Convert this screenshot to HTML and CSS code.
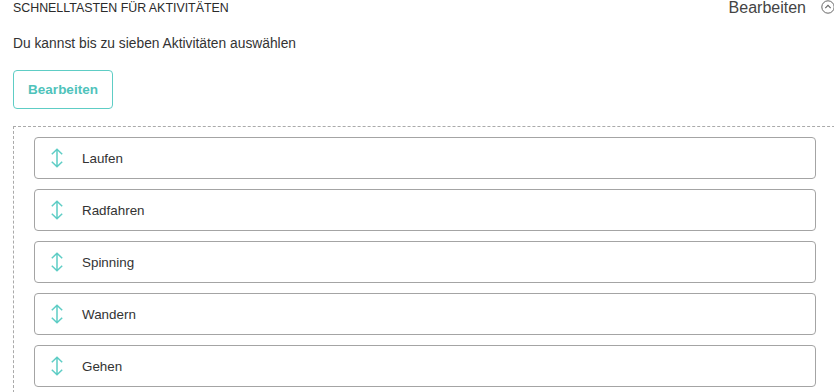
FILE: index.html
```html
<!DOCTYPE html>
<html lang="de">
<head>
<meta charset="utf-8">
<link rel="stylesheet" href="styles.css">
</head>
<body>
<div class="page">
  <div class="header">
    <h2 class="title">Schnelltasten für Aktivitäten</h2>
    <div class="header-right">
      <span class="edit-link">Bearbeiten</span>
      <svg class="collapse" width="14" height="14" viewBox="0 0 14 14">
        <circle cx="7" cy="7" r="6.2" fill="none" stroke="#666" stroke-width="1"/>
        <path d="M4.3 8.2 L7 5.4 L9.7 8.2" fill="none" stroke="#666" stroke-width="1.1"/>
      </svg>
    </div>
  </div>
  <p class="subtitle">Du kannst bis zu sieben Aktivitäten auswählen</p>
  <button class="edit-btn">Bearbeiten</button>
  <div class="dropzone">
    <div class="row"><svg class="drag" viewBox="0 0 14 20"><path d="M7 1.5 V18.5 M1.8 6.2 L7 1.2 L12.2 6.2 M1.8 13.8 L7 18.8 L12.2 13.8" fill="none" stroke="#5ecdc5" stroke-width="1.5"/></svg><span class="label">Laufen</span></div>
    <div class="row"><svg class="drag" viewBox="0 0 14 20"><path d="M7 1.5 V18.5 M1.8 6.2 L7 1.2 L12.2 6.2 M1.8 13.8 L7 18.8 L12.2 13.8" fill="none" stroke="#5ecdc5" stroke-width="1.5"/></svg><span class="label">Radfahren</span></div>
    <div class="row"><svg class="drag" viewBox="0 0 14 20"><path d="M7 1.5 V18.5 M1.8 6.2 L7 1.2 L12.2 6.2 M1.8 13.8 L7 18.8 L12.2 13.8" fill="none" stroke="#5ecdc5" stroke-width="1.5"/></svg><span class="label">Spinning</span></div>
    <div class="row"><svg class="drag" viewBox="0 0 14 20"><path d="M7 1.5 V18.5 M1.8 6.2 L7 1.2 L12.2 6.2 M1.8 13.8 L7 18.8 L12.2 13.8" fill="none" stroke="#5ecdc5" stroke-width="1.5"/></svg><span class="label">Wandern</span></div>
    <div class="row"><svg class="drag" viewBox="0 0 14 20"><path d="M7 1.5 V18.5 M1.8 6.2 L7 1.2 L12.2 6.2 M1.8 13.8 L7 18.8 L12.2 13.8" fill="none" stroke="#5ecdc5" stroke-width="1.5"/></svg><span class="label">Gehen</span></div>
  </div>
</div>
</body>
</html>
```
FILE: styles.css
```css
html, body {
  margin: 0;
  padding: 0;
  background: #fff;
  overflow: hidden;
}
body {
  font-family: "Liberation Sans", Arial, sans-serif;
  color: #333;
}
.page {
  width: 834px;
  height: 392px;
  overflow: hidden;
}
.header {
  display: flex;
  justify-content: space-between;
  align-items: flex-start;
  padding-left: 13px;
  height: 20px;
}
.title {
  margin: 0;
  padding-top: 1px;
  font-size: 12.4px;
  font-weight: normal;
  text-transform: uppercase;
  line-height: 14px;
  color: #2b2b2b;
}
.header-right {
  display: flex;
  align-items: flex-start;
  gap: 15px;
  margin-right: -1px;
}
.edit-link {
  font-size: 16px;
  line-height: 16px;
  color: #444;
}
.collapse {
  flex: none;
  margin-top: 0;
}
.subtitle {
  margin: 16px 0 0 13px;
  font-size: 13.8px;
  line-height: 16px;
  color: #333;
}
.edit-btn {
  display: block;
  margin: 18px 0 0 13px;
  width: 100px;
  height: 39px;
  border: 1px solid #5ecdc5;
  border-radius: 4px;
  background: #fff;
  color: #4fc3bb;
  font-family: "Liberation Sans", Arial, sans-serif;
  font-size: 13.5px;
  font-weight: bold;
  padding: 0;
}
.dropzone {
  margin: 17px 0 0 13px;
  width: 860px;
  border: 1px dashed #aaa;
  padding: 10px 0 10px 20px;
  display: flex;
  flex-direction: column;
  gap: 10px;
}
.row {
  box-sizing: border-box;
  width: 782px;
  height: 42px;
  border: 1px solid #a4a4a4;
  border-radius: 4px;
  display: flex;
  align-items: center;
  padding-left: 15px;
}
.drag {
  width: 14px;
  height: 20px;
  flex: none;
}
.label {
  margin-left: 18px;
  font-size: 13.4px;
  color: #333;
}
```
